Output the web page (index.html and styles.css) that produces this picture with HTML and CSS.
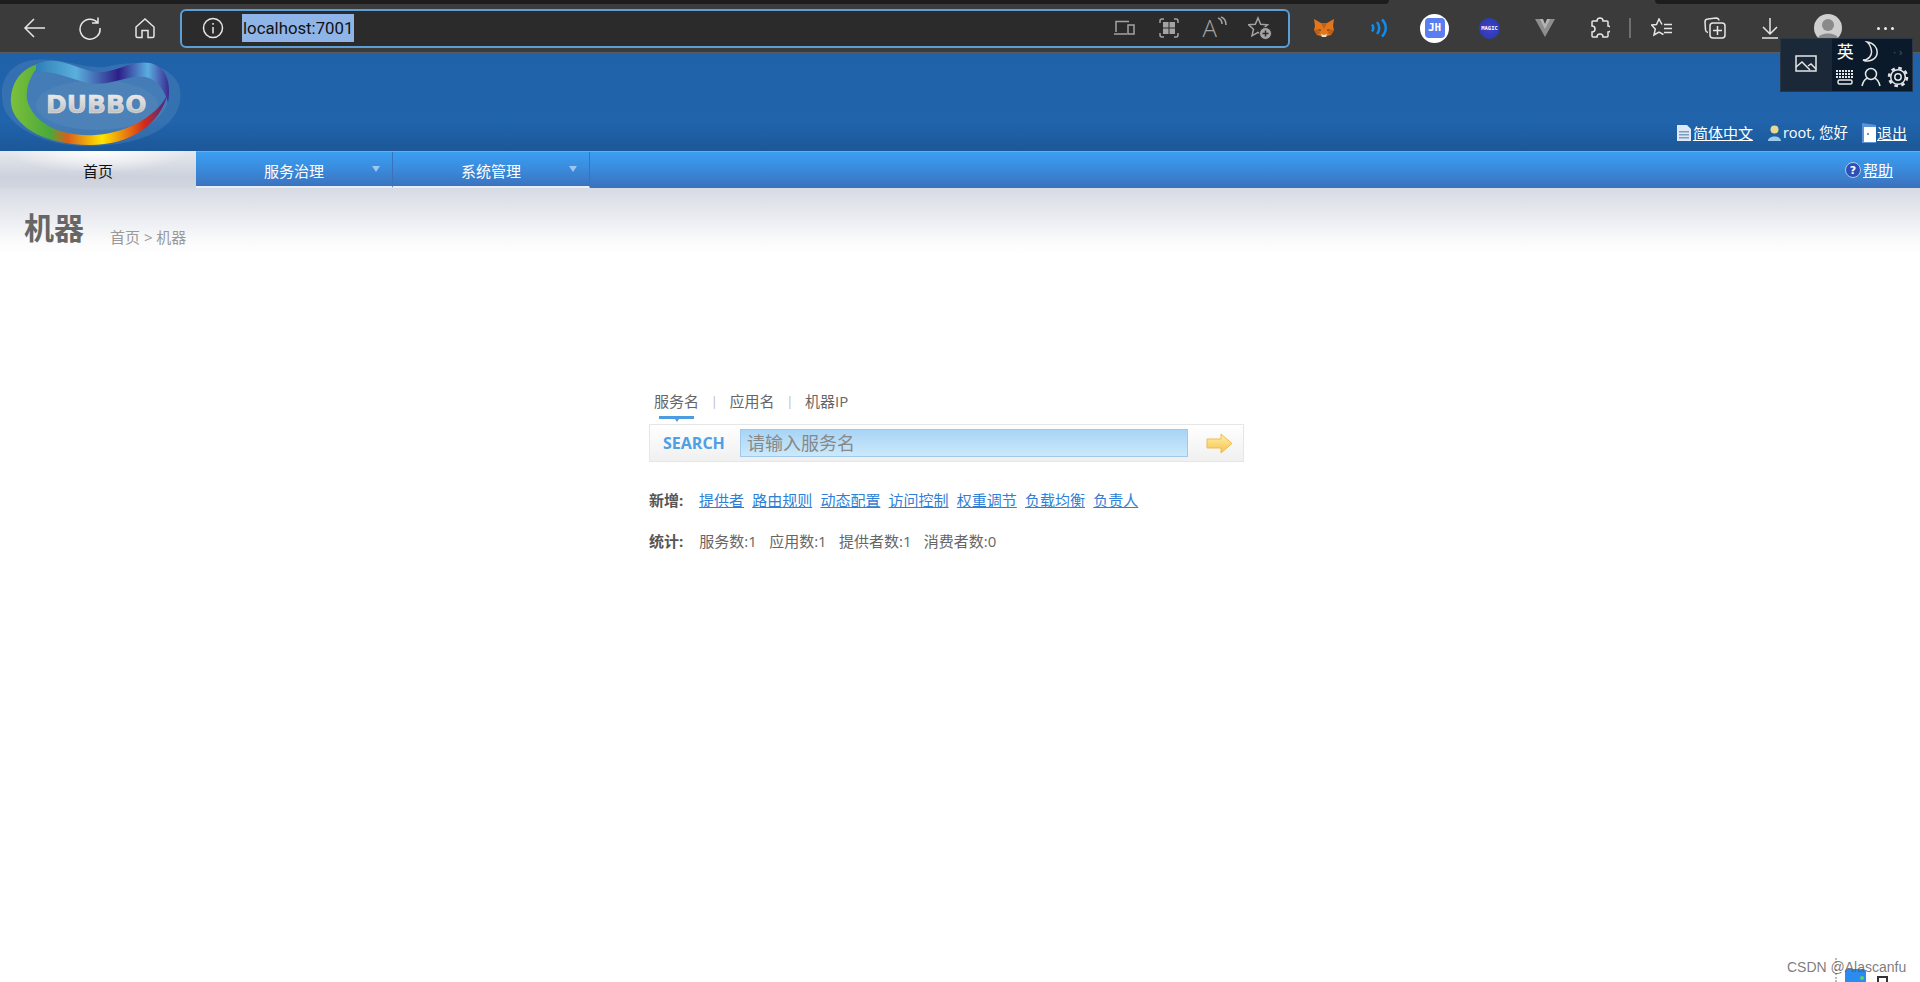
FILE: index.html
```html
<!DOCTYPE html>
<html lang="zh-CN">
<head>
<meta charset="utf-8">
<title>dubbo admin</title>
<link rel="stylesheet" href="styles.css">
</head>
<body>
<div class="tabstrip"><div class="strip-left"></div><div class="strip-right"></div></div>
<div class="toolbar">
  <div class="slot"><svg width="24" height="24" viewBox="0 0 24 24" class="ic"><path d="M22 12H3M11 3l-9 9 9 9"/></svg></div>
  <div class="slot"><svg width="24" height="24" viewBox="0 0 24 24" class="ic"><path d="M19.500 6.500A10 10 0 1 0 22 12M20 1.500v5.500h-6"/></svg></div>
  <div class="slot"><svg width="22" height="22" viewBox="0 0 22 22" class="ic"><path d="M2 10l9-8 9 8v9a1.500 1.500 0 0 1-1.500 1.500H14v-7H8v7H3.500A1.500 1.500 0 0 1 2 19z"/></svg></div>
  <div class="addr">
    <svg width="22" height="22" viewBox="0 0 22 22" class="ic info"><circle cx="11" cy="11" r="9.500"/><path d="M11 10v6.500M11 6v1.800"/></svg>
    <span class="url">localhost:7001</span>
    <div class="addr-icons">
      <div class="aslot"><svg width="22" height="18" viewBox="0 0 22 18" class="ic dim"><path d="M3 13V2.500h13M1 15h13M15 6h6v9h-6z"/></svg></div>
      <div class="aslot"><svg width="20" height="20" viewBox="0 0 20 20" class="ic dim"><path d="M1 5V3a2 2 0 0 1 2-2h2M15 1h2a2 2 0 0 1 2 2v2M19 15v2a2 2 0 0 1-2 2h-2M5 19H3a2 2 0 0 1-2-2v-2"/><path class="fl" d="M4 4h5.500v5.500H4zM10.500 4H16v5.500h-5.500zM4 10.500h5.500V16H4zM10.500 10.500H16V16h-5.500z"/></svg></div>
      <div class="aslot"><span class="read">A</span><svg width="10" height="12" viewBox="0 0 10 12" class="ic dim read-w"><path d="M1 2c3 1 4 4 4 6M4 1c3 1 5 4 5 8"/></svg></div>
      <div class="aslot"><svg width="24" height="24" viewBox="0 0 24 24" class="ic dim"><path d="M10 2l2.700 6.200 6.800.6-5 4.400 1.500 6.600L10 16.300 4 19.800l1.500-6.600-5-4.400 6.800-.6z"/><circle class="fl ring" cx="17.500" cy="17.500" r="6"/><path class="cut" d="M17.500 14.500v6M14.500 17.500h6"/></svg></div>
    </div>
  </div>
  <div class="slots">
    <div class="slot slot-fox"><svg width="22" height="20" viewBox="0 0 22 20"><path fill="#e2761b" d="M1 1l7 4h6l7-4-1 7 1 4-3 5-4 1-1 1H9l-1-1-4-1-3-5 1-4z"/><path fill="#c05f14" d="M8 5h6l-3 6zM1 12l5-1 1 4-3 2zM21 12l-5-1-1 4 3 2z"/><path fill="#e4e0dc" d="M8 16l3 1 3-1-1 3H9z"/><path fill="#222" d="M6 11l2 1-1 1zM16 11l-2 1 1 1z"/></svg></div>
    <div class="slot"><svg width="18" height="20" viewBox="0 0 18 20" class="waves"><path d="M2 6.500c1.500 2 1.500 5 0 7M7 4c3 3.500 3 8.500 0 12M12 1.500c5 5 5 12 0 17"/></svg></div>
    <div class="slot"><span class="jh"><span class="jh-in">JH</span></span></div>
    <div class="slot"><span class="magic">MAGIC</span></div>
    <div class="slot"><svg width="20" height="18" viewBox="0 0 20 18"><path fill="#8e8e8e" d="M0 0h7l3 6 3-6h7L10 18z"/><path fill="#b5b5b5" d="M5 0h3l2 5 2-5h3l-5 10z"/></svg></div>
    <div class="slot"><svg width="20" height="22" viewBox="0 0 20 22" class="ic"><path d="M7 4a3 3 0 1 1 6 0h4a1 1 0 0 1 1 1v4a3 3 0 1 1 0 6v4a1 1 0 0 1-1 1h-4a3 3 0 0 0-6 0H3a1 1 0 0 1-1-1v-4a3 3 0 0 0 0-6V5a1 1 0 0 1 1-1z"/></svg></div>
    <div class="sep"></div>
    <div class="slot"><svg width="22" height="20" viewBox="0 0 22 20" class="ic"><path d="M11 6.500L8 1 5.500 6.500.5 7l3.800 4L3 17l5-3 4.500 2.500M13 6.500h8M13 10.500h8M13 14.500h8"/></svg></div>
    <div class="slot slot-coll"><svg width="22" height="22" viewBox="0 0 22 22" class="ic"><path d="M4 15.500A3 3 0 0 1 1.500 13L1 5a3 3 0 0 1 3-3l8-1a3 3 0 0 1 3 2.500"/><rect x="6" y="6" width="15" height="15" rx="3"/><path d="M13.500 9v9M9 13.500h9"/></svg></div>
    <div class="slot"><svg width="18" height="22" viewBox="0 0 18 22" class="ic"><path d="M9 1v16M2 10l7 7 7-7M1 21h16"/></svg></div>
    <div class="slot slot-user"><svg width="28" height="28" viewBox="0 0 28 28"><circle cx="14" cy="14" r="14" fill="#cfcfcf"/><circle cx="14" cy="11" r="6" fill="#8a8a8a"/><path fill="#8a8a8a" d="M4 24c2-6 18-6 20 0a14 14 0 0 1-20 0z"/></svg></div>
    <div class="slot slot-more"><span class="dots"><i></i><i></i><i></i></span></div>
  </div>
</div>

<header class="head">
  <svg class="logo" width="182" height="98" viewBox="0 0 182 98">
    <defs>
      <linearGradient id="rain" x1="0" y1="0" x2="1" y2="0">
        <stop offset="0" stop-color="#7cc03a"/><stop offset=".25" stop-color="#4aa83c"/><stop offset=".36" stop-color="#d8601a"/><stop offset=".58" stop-color="#ffe600"/><stop offset=".85" stop-color="#d42a1c"/><stop offset="1" stop-color="#40288a"/>
      </linearGradient>
      <linearGradient id="top" x1="0" y1="0" x2="1" y2="0">
        <stop offset="0" stop-color="#2f7fb8"/><stop offset=".3" stop-color="#5ab0dc"/><stop offset=".62" stop-color="#2d1f88"/><stop offset=".84" stop-color="#5aaee0"/><stop offset="1" stop-color="#3a2a90"/>
      </linearGradient>
      <linearGradient id="txt" x1="0" y1="0" x2="0" y2="1"><stop offset="0" stop-color="#f4f4f4"/><stop offset="1" stop-color="#b4b4b4"/></linearGradient>
    </defs>
    <path class="glow" d="M28 8c30-6 52 8 77 6 25-6 62-8 74 18 6 22-6 46-47 56-40 10-102 8-127-30C-3 36 4 14 28 8z"/>
    <path class="glow" d="M36 14c30-4 46 10 70 8 24-6 50-6 62 14 4 18-10 36-42 46-36 8-84 4-106-24C8 38 16 20 36 14z"/>
    <ellipse cx="97" cy="52" rx="61" ry="25" fill="#4c82b8"/>
    <path fill="url(#rain)" d="M42 10C20 14 10 32 11 50c1 20 29 42 79 42 40 0 70-20 78-52-8 20-38 40-73 42-35 2-60-12-67-32-4-12 2-30 14-40z"/>
    <path fill="url(#top)" d="M36 12c16-10 34 0 54 6 20 6 40-12 60-8 15 3 22 18 18 40-2-10-10-24-23-26-20-2-35 10-57 6-18-4-38-14-52-10z"/>
    <text x="46" y="60" class="logo-text" fill="url(#txt)">DUBBO</text>
  </svg>
  <div class="userbar">
    <svg width="14" height="16" viewBox="0 0 14 16"><path fill="#dfe9f5" d="M0 0h10l4 4v12H0z"/><path fill="#7e9cc4" d="M2 6h10v1.500H2zM2 9h10v1.500H2zM2 12h10v1.500H2z"/></svg>
    <a href="#" class="ulink lang">简体中文</a>
    <svg class="ml user-ic" width="15" height="16" viewBox="0 0 15 16"><circle cx="7.500" cy="4.500" r="4" fill="#e8d890"/><path fill="#9ccbec" d="M1 16c0-6 13-6 13 0z"/></svg>
    <span class="uname">root, 您好</span>
    <svg class="ml exit" width="16" height="20" viewBox="0 0 16 20"><path fill="#5d93d6" d="M1 0l14 2v18H1z"/><path fill="#fff" d="M3 4h12v15H3z"/><circle cx="7" cy="11" r="1" fill="#3a76c0"/></svg>
    <a href="#" class="ulink">退出</a>
  </div>
</header>

<nav class="nav">
  <a class="tab tab-on" href="#">首页</a>
  <a class="tab tab-menu" href="#">服务治理<span class="caret"></span></a>
  <a class="tab tab-menu" href="#">系统管理<span class="caret"></span></a>
  <div class="help">
    <svg width="16" height="16" viewBox="0 0 16 16"><circle cx="8" cy="8" r="7.500" fill="#2b50b8" stroke="#b5c6e8"/><text x="8" y="12" class="q">?</text></svg>
    <a href="#" class="ulink">帮助</a>
  </div>
</nav>

<main class="main">
  <div class="crumbs">
    <h1 class="title">机器</h1>
    <span class="path">首页 &gt; 机器</span>
  </div>
  <section class="search-wrap">
    <div class="kinds">
      <span class="kind kind-on">服务名</span><span class="bar">|</span>
      <span class="kind">应用名</span><span class="bar">|</span>
      <span class="kind">机器IP</span>
    </div>
    <div class="box">
      <span class="search-label">SEARCH</span>
      <div class="input">请输入服务名</div>
      <svg class="go" width="27" height="21" viewBox="0 0 27 21"><defs><linearGradient id="ar" x1="0" y1="0" x2="0" y2="1"><stop offset="0" stop-color="#fff0a8"/><stop offset="1" stop-color="#f6c24a"/></linearGradient></defs><path fill="url(#ar)" stroke="#eebb55" d="M1 6h14V1l11 9.500L15 20v-5H1z"/></svg>
    </div>
    <div class="row row-add">
      <b class="lbl">新增:</b>
      <a href="#">提供者</a><a href="#">路由规则</a><a href="#">动态配置</a><a href="#">访问控制</a><a href="#">权重调节</a><a href="#">负载均衡</a><a href="#">负责人</a>
    </div>
    <div class="row row-stat">
      <b class="lbl">统计:</b>
      <span>服务数:1</span><span>应用数:1</span><span>提供者数:1</span><span>消费者数:0</span>
    </div>
  </section>
</main>

<div class="ime">
  <div class="ime-pic"><svg width="22" height="18" viewBox="0 0 22 18" class="ic"><rect x="1" y="1" width="20" height="15"/><path d="M1 12l6-5 8 8M13 11l3-2 5 5"/></svg></div>
  <div class="ime-grid">
    <span class="ime-zh">英</span>
    <svg width="20" height="22" viewBox="0 0 20 22" class="ic"><path d="M6 1c7 1 11 6 10 12-1 5-8 9-14 6 6 0 9-5 8.500-9C10 6 8.500 3 6 1z"/></svg>
    <span class="ime-more">· ›</span>
    <svg width="20" height="16" viewBox="0 0 20 16" class="ic"><path d="M1 2h18M1 5h18M1 8h18" stroke-width="2" stroke-dasharray="2 1"/><rect x="3" y="11" width="14" height="4" rx="1.500"/></svg>
    <svg width="20" height="20" viewBox="0 0 20 20" class="ic"><circle cx="10" cy="7" r="5.500"/><path d="M1 19c1-4 3-7 5.500-8M19 19c-1-4-3-7-5.500-8"/></svg>
    <svg width="22" height="22" viewBox="0 0 22 22" class="ic"><circle cx="11" cy="11" r="3.200"/><circle cx="11" cy="11" r="7.300"/><circle cx="11" cy="11" r="9" stroke-width="2.500" stroke-dasharray="3.500 3.570"/></svg>
  </div>
</div>

<div class="mark">
  <span class="mark-dots"></span>
  <span class="mark-app"></span>
  <span class="mark-corner"></span>
  <span class="mark-text">CSDN @Alascanfu</span>
</div>
</body>
</html>
```

FILE: styles.css
```css
* { box-sizing: border-box; }
html, body { margin: 0; padding: 0; height: 982px; overflow: hidden; background: #fff; }
body { font-family: "Open Sans", "Noto Sans CJK SC", sans-serif; color: #555; font-size: 15px; position: relative; }
a { color: inherit; }

.tabstrip { height: 4px; background: #3b3b3b; display: flex; justify-content: space-between; }
.strip-left { width: 1389px; background: #1d1d1d; border-bottom-right-radius: 4px; }
.strip-right { width: 265px; background: #1d1d1d; border-bottom-left-radius: 4px; }

.toolbar { height: 49px; background: #3b3b3b; border-bottom: 1px solid #5a5a5a; display: flex; align-items: center; padding-left: 7px; }
.ic { fill: none; stroke: #e6e6e6; stroke-width: 1.500; }
.ic .fl { fill: #a4a4a4; stroke: none; }
.ic .ring { stroke: #2b2b2b; stroke-width: 1; }
.ic .cut { stroke: #2b2b2b; stroke-width: 1.500; }
.ic.dim { stroke: #a4a4a4; }
.slot { width: 55px; height: 40px; display: flex; align-items: center; justify-content: center; flex: none; }
.slots { display: flex; align-items: center; margin-left: 7px; }
.sep { width: 2px; height: 20px; margin: 0 3px 0 2px; background: #6f6f6f; flex: none; }
.slot-fox { margin-left: -1px; margin-right: 1px; }
.slot-coll { margin-left: -2px; }
.slot-user { margin-left: 3px; margin-right: 3px; }

.addr { width: 1110px; height: 39px; margin-left: 8px; background: #2b2b2b; border: 2px solid #5b9fd6; border-radius: 6px; display: flex; align-items: center; padding-left: 20px; flex: none; }
.url { margin-left: 18px; background: #8fb4e8; color: #111; font-family: Roboto, sans-serif; font-size: 16.800px; line-height: 28px; height: 28px; padding: 0 1px; white-space: nowrap; }
.addr-icons { margin-left: auto; display: flex; padding-right: 5px; }
.aslot { width: 45.500px; height: 24px; display: flex; align-items: center; justify-content: center; position: relative; }
.read { color: #a4a4a4; font-size: 24px; font-family: "Open Sans", sans-serif; font-weight: 300; line-height: 24px; margin-right: 3px; }
.read-w { margin-bottom: 12px; margin-left: -3px; }

.waves { fill: none; stroke: #0f8cec; stroke-width: 2.500; margin-right: 2px; }
.jh { width: 29px; height: 29px; border-radius: 50%; background: #fff; display: flex; align-items: center; justify-content: center; }
.jh-in { width: 20px; height: 20px; border-radius: 4px; background: #5b7df0; color: #fff; font: bold 11px/20px "DejaVu Sans Mono", monospace; text-align: center; }
.magic { width: 21px; height: 21px; border-radius: 50%; background: radial-gradient(circle, #4a3bd0, #1b3fa0); color: #fff; font: bold 5.500px/21px "DejaVu Sans Mono", monospace; text-align: center; white-space: nowrap; display: flex; justify-content: center; }
.dots { display: flex; gap: 4px; }
.dots i { width: 3px; height: 3px; background: #eee; border-radius: 50%; display: block; }

.head { height: 98px; background: linear-gradient(#2062a9 0%, #2064ab 70%, #1c5799 100%); display: flex; align-items: flex-end; justify-content: space-between; }
.logo { align-self: flex-start; display: block; }
.glow { fill: #7ba3cf; opacity: .22; }
.logo-text { font: bold 25px "DejaVu Sans", sans-serif; stroke: #e8e8e8; stroke-width: .5px; }
.userbar { display: flex; align-items: center; color: #fff; padding: 0 13px 8px 0; font-size: 15px; line-height: 20px; }
.userbar svg { display: block; margin-right: 1px; }
.userbar .lang { margin-left: 1px; }
.ulink { color: #fff; text-decoration: underline; }
.ml { margin-left: 15px; }
.userbar .user-ic { margin-left: 14px; }
.uname { font-size: 14.500px; }
.userbar .exit { margin-left: 13px; margin-right: 0; }

.nav { height: 37px; background: linear-gradient(#3a9ff2 0%, #3a8ee0 40%, #3b70bb 100%); border-top: 1px solid #5cb2f2; display: flex; position: relative; }
.tab { display: block; width: 197px; height: 35px; line-height: 38px; text-align: center; color: #fff; text-decoration: none; position: relative; flex: none; }
.tab-on { width: 196px; height: 37px; margin-top: -1px; line-height: 40px; color: #111; background: radial-gradient(ellipse 90px 22px at 50% 0, #fff 0%, rgba(255,255,255,0) 100%), linear-gradient(#e6e8ed, #ccd1dc 70%, #d2d6df); }
.tab-menu { height: 36px; border-bottom: 2px solid #e8eef7; border-right: 1px solid #3b70bb; }
.caret { position: absolute; right: 12px; top: 14px; border: 4px solid transparent; border-top: 6px solid #9fc6ee; border-bottom: 0; }
.help { margin-left: auto; padding-right: 27px; display: flex; align-items: center; gap: 2px; color: #fff; height: 35px; }
.help svg { display: block; }
.q { font: bold 11px "DejaVu Sans", sans-serif; fill: #fff; text-anchor: middle; }

.main { background: linear-gradient(#d6dae3 0, #e9ebf0 28px, #fafafb 52px, #fff 66px) no-repeat; height: 794px; overflow: hidden; }
.crumbs { display: flex; align-items: baseline; padding: 20px 0 0 24px; height: 197px; }
.title { margin: 0; font-size: 30px; line-height: 40px; font-weight: 700; color: #666; }
.path { margin-left: 26px; font-size: 15px; color: #999; position: relative; top: 4px; }

.search-wrap { width: 595px; margin-left: 649px; }
.kinds { display: flex; align-items: flex-start; height: 40px; padding: 4px 0 0 5px; color: #666; font-size: 15px; }
.kind { position: relative; line-height: 24px; }
.kind-on::after { content: ""; position: absolute; left: 5px; right: 5px; top: 27px; height: 3px; background: #4d9be0; }
.kind-on::before { content: ""; position: absolute; left: 50%; top: 30px; margin-left: -2px; border: 2px solid transparent; border-top: 3px solid #4d9be0; border-bottom: 0; }
.bar { margin: 0 11.700px; color: #bbb; font-size: 13px; line-height: 24px; }
.box { height: 38px; margin-top: -1px; display: flex; align-items: center; background: linear-gradient(#fff, #f0f0f0); border: 1px solid #e6e6e6; padding-left: 13px; }
.search-label { width: 77px; color: #4d9fe6; font: 700 16px/20px "Open Sans", sans-serif; flex: none; }
.input { width: 448px; height: 28px; background: linear-gradient(#a9d4f5, #cbe9fb); border: 1px solid #9fc8ea; color: #888; font-size: 18px; line-height: 27px; padding-left: 6px; flex: none; }
.go { margin-left: 18px; display: block; flex: none; }
.row { display: flex; align-items: center; height: 22px; font-size: 15px; color: #666; white-space: nowrap; }
.row-add { margin-top: 26px; gap: 8.200px; }
.row-add a { color: #2f7fd6; text-decoration: underline; }
.row-add .lbl { width: 41.800px; }
.row-stat { margin-top: 19px; gap: 12.300px; }
.lbl { width: 38px; color: #555; font-weight: 700; flex: none; }

.ime { position: absolute; left: 1780px; top: 38px; width: 133px; height: 54px; background: #0a1a2a; border: 1px solid #2a3644; display: flex; }
.ime-pic { width: 51px; background: #1a2838; display: flex; align-items: center; justify-content: center; padding: 0 2px 2px 0; }
.ime-grid { flex: 1; display: grid; grid-template-columns: repeat(3, 1fr); grid-template-rows: 1fr 1fr; justify-items: center; align-items: center; padding: 0 1px 2px 0; }
.ime-zh { color: #fff; font-size: 17px; line-height: 20px; }
.ime-more { color: #556; font-size: 11px; }

.mark { position: absolute; left: 1787px; top: 958px; width: 133px; height: 24px; }
.mark-dots { position: absolute; left: 48px; top: 0; height: 24px; border-left: 2px dotted #bbb; }
.mark-app { position: absolute; left: 58px; top: 11px; width: 21px; height: 13px; background: #2a8cf0; border-radius: 3px 3px 0 0; }
.mark-app::after { content: ""; position: absolute; right: 2px; top: 7px; width: 4px; height: 4px; border-radius: 50%; background: #5fd06a; }
.mark-corner { position: absolute; left: 90px; top: 18px; width: 11px; height: 6px; border: 2px solid #333; border-bottom: 0; }
.mark-text { position: absolute; left: 0; top: 0; font: 14px/18px "Liberation Sans", sans-serif; color: rgba(90,90,90,.8); white-space: nowrap; }
```
